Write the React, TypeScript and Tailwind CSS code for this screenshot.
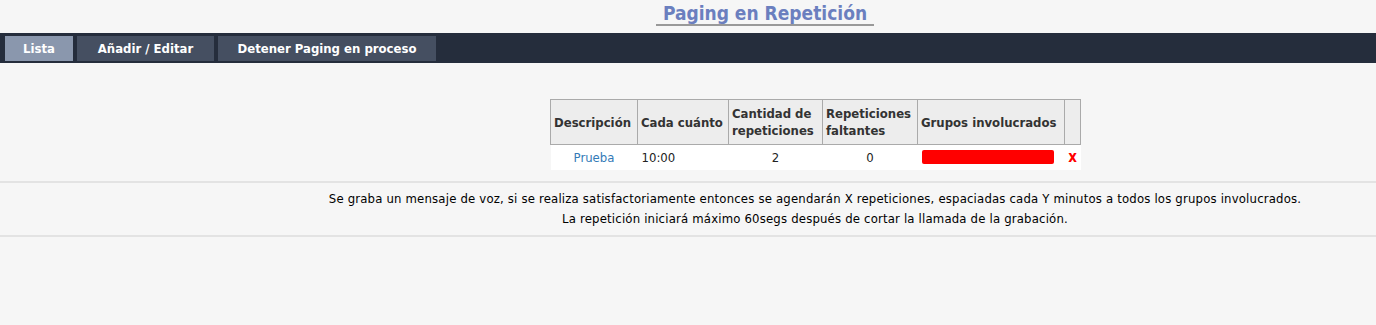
const tabs = [
  { label: "Lista", active: true, w: "w-[68px]" },
  { label: "Añadir / Editar", active: false, w: "w-[137px]" },
  { label: "Detener Paging en proceso", active: false, w: "w-[218px]" },
];

const headers = [
  { label: "Descripción", w: "w-[87px]" },
  { label: "Cada cuánto", w: "w-[91px]" },
  { label: "Cantidad de repeticiones", w: "w-[94px]" },
  { label: "Repeticiones faltantes", w: "w-[95px]" },
  { label: "Grupos involucrados", w: "w-[147px]" },
  { label: "", w: "w-[16px]" },
];

const App = () => {
  return (
    <div className="min-h-[325px] bg-[#f6f6f6] text-[#222] font-['DejaVu_Sans_Condensed','DejaVu_Sans',sans-serif]">
      <div className="flex h-[33px] pl-[656px]">
        <h1 className="mt-[3px] h-[23px] w-[218px] border-b-2 border-[#999] text-center text-[19px] font-bold leading-[20px] text-[#6b7fbf]">
          Paging en Repetición
        </h1>
      </div>
      <nav className="flex h-[30px] items-start gap-[4px] bg-[#252d3c] pl-[5px] pt-[3px]">
        {tabs.map((t) => (
          <button
            key={t.label}
            type="button"
            className={`${t.w} h-[25px] text-[13px] font-bold text-white ${
              t.active ? "bg-[#8a97ad]" : "bg-[#454f61]"
            }`}
          >
            {t.label}
          </button>
        ))}
      </nav>
      <div className="flex pl-[550px] pt-[36px]">
        <table className="border-collapse text-[13px]">
          <thead>
            <tr className="h-[45px] bg-[#ededed]">
              {headers.map((h, i) => (
                <th
                  key={i}
                  className={`${h.w} border border-[#aaa] px-[3px] text-left font-bold leading-[17px] text-[#333]`}
                >
                  {h.label}
                </th>
              ))}
            </tr>
          </thead>
          <tbody>
            <tr className="h-[25px] bg-white">
              <td className="text-center text-[#337ab7]">Prueba</td>
              <td className="px-[4px]">10:00</td>
              <td className="text-center">2</td>
              <td className="text-center">0</td>
              <td className="px-[4px]">
                <div className="h-[14px] w-[132px] rounded-[2px] bg-[#ff0000]" />
              </td>
              <td className="text-center text-[15px] font-bold text-[#ff0000]">x</td>
            </tr>
          </tbody>
        </table>
      </div>
      <div className="mt-[11px] border-y-2 border-[#e3e3e3] py-[6px] pl-[254px] text-center text-[13px] leading-[20px] tracking-[0.18px] text-black">
        <p>
          Se graba un mensaje de voz, si se realiza satisfactoriamente entonces se agendarán X
          repeticiones, espaciadas cada Y minutos a todos los grupos involucrados.
        </p>
        <p>La repetición iniciará máximo 60segs después de cortar la llamada de la grabación.</p>
      </div>
    </div>
  );
};

export default App;
